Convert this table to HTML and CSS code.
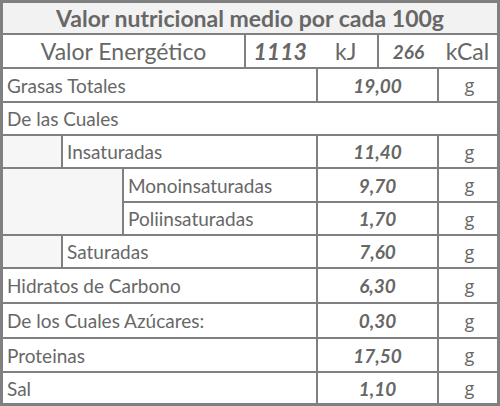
FILE: index.html
```html
<!DOCTYPE html>
<html lang="es">
<head>
<meta charset="utf-8">
<title>Valor nutricional</title>
<link rel="stylesheet" href="styles.css">
</head>
<body>
<div class="table">
  <div class="cell title span-all">Valor nutricional medio por cada 100g</div>

  <div class="cell energy span-1-3">Valor Energético</div>
  <div class="cell pair span-4-5"><span class="num big w70">1113</span><span class="unit big w59">kJ</span></div>
  <div class="cell pair span-6-7"><span class="num w58">266</span><span class="unit big w58">kCal</span></div>

  <div class="cell label span-1-4">Grasas Totales</div>
  <div class="cell num span-5-6">19,00</div>
  <div class="cell unit gram">g</div>

  <div class="cell label span-all">De las Cuales</div>

  <div class="cell empty"></div>
  <div class="cell label span-2-4">Insaturadas</div>
  <div class="cell num span-5-6">11,40</div>
  <div class="cell unit gram">g</div>

  <div class="cell empty block"></div>
  <div class="cell label span-3-4">Monoinsaturadas</div>
  <div class="cell num span-5-6">9,70</div>
  <div class="cell unit gram">g</div>
  <div class="cell label span-3-4">Poliinsaturadas</div>
  <div class="cell num span-5-6">1,70</div>
  <div class="cell unit gram">g</div>

  <div class="cell empty"></div>
  <div class="cell label span-2-4">Saturadas</div>
  <div class="cell num span-5-6">7,60</div>
  <div class="cell unit gram">g</div>

  <div class="cell label span-1-4">Hidratos de Carbono</div>
  <div class="cell num span-5-6">6,30</div>
  <div class="cell unit gram">g</div>

  <div class="cell label span-1-4">De los Cuales Azúcares:</div>
  <div class="cell num span-5-6">0,30</div>
  <div class="cell unit gram">g</div>

  <div class="cell label span-1-4">Proteinas</div>
  <div class="cell num span-5-6">17,50</div>
  <div class="cell unit gram">g</div>

  <div class="cell label span-1-4">Sal</div>
  <div class="cell num span-5-6">1,10</div>
  <div class="cell unit gram">g</div>
</div>
</body>
</html>
```
FILE: styles.css
```css
html, body {
  margin: 0;
  padding: 0;
  background: #ffffff;
}

.table {
  box-sizing: border-box;
  width: 500px;
  height: 406px;
  border: 3px solid #808080;
  background: #808080;
  display: grid;
  grid-template-columns: 58px 59px 120px 70px 59px 58px 58px;
  grid-template-rows: 30px 32px 32px 31px 31px 32px 31px 31px 33px 33px 32px 30px;
  gap: 2px;
  font-family: Lato, "Open Sans", sans-serif;
  color: #676767;
}

.cell {
  background: #ffffff;
  display: flex;
  align-items: center;
  white-space: nowrap;
  overflow: hidden;
}

.span-all { grid-column: 1 / 8; }
.span-1-3 { grid-column: 1 / 4; }
.span-1-4 { grid-column: 1 / 5; }
.span-2-4 { grid-column: 2 / 5; }
.span-3-4 { grid-column: 3 / 5; }
.span-4-5 { grid-column: 4 / 6; }
.span-5-6 { grid-column: 5 / 7; }
.span-6-7 { grid-column: 6 / 8; }

.title {
  background: #f2f2f2;
  justify-content: center;
  font-weight: 700;
  font-size: 23px;
}

.energy {
  justify-content: center;
  font-size: 23px;
}

.label {
  padding-left: 4px;
  font-size: 19px;
}

.num {
  justify-content: center;
  font-weight: 700;
  font-style: italic;
  font-size: 19px;
}

.unit {
  justify-content: center;
  font-size: 19px;
}

.gram {
  font-family: "Open Sans", Lato, sans-serif;
  font-size: 18px;
  padding-left: 3px;
}

.big { font-size: 23px; }

.pair { padding: 0; }
.pair span {
  display: flex;
  justify-content: center;
  align-items: center;
  height: 100%;
}
.w70 { width: 72px; }
.w59 { width: 66px; }
.w58 { width: 60px; }

.empty {
  background: #f6f6f6;
}

.block {
  grid-row: span 2;
  grid-column: 1 / 3;
}
```
